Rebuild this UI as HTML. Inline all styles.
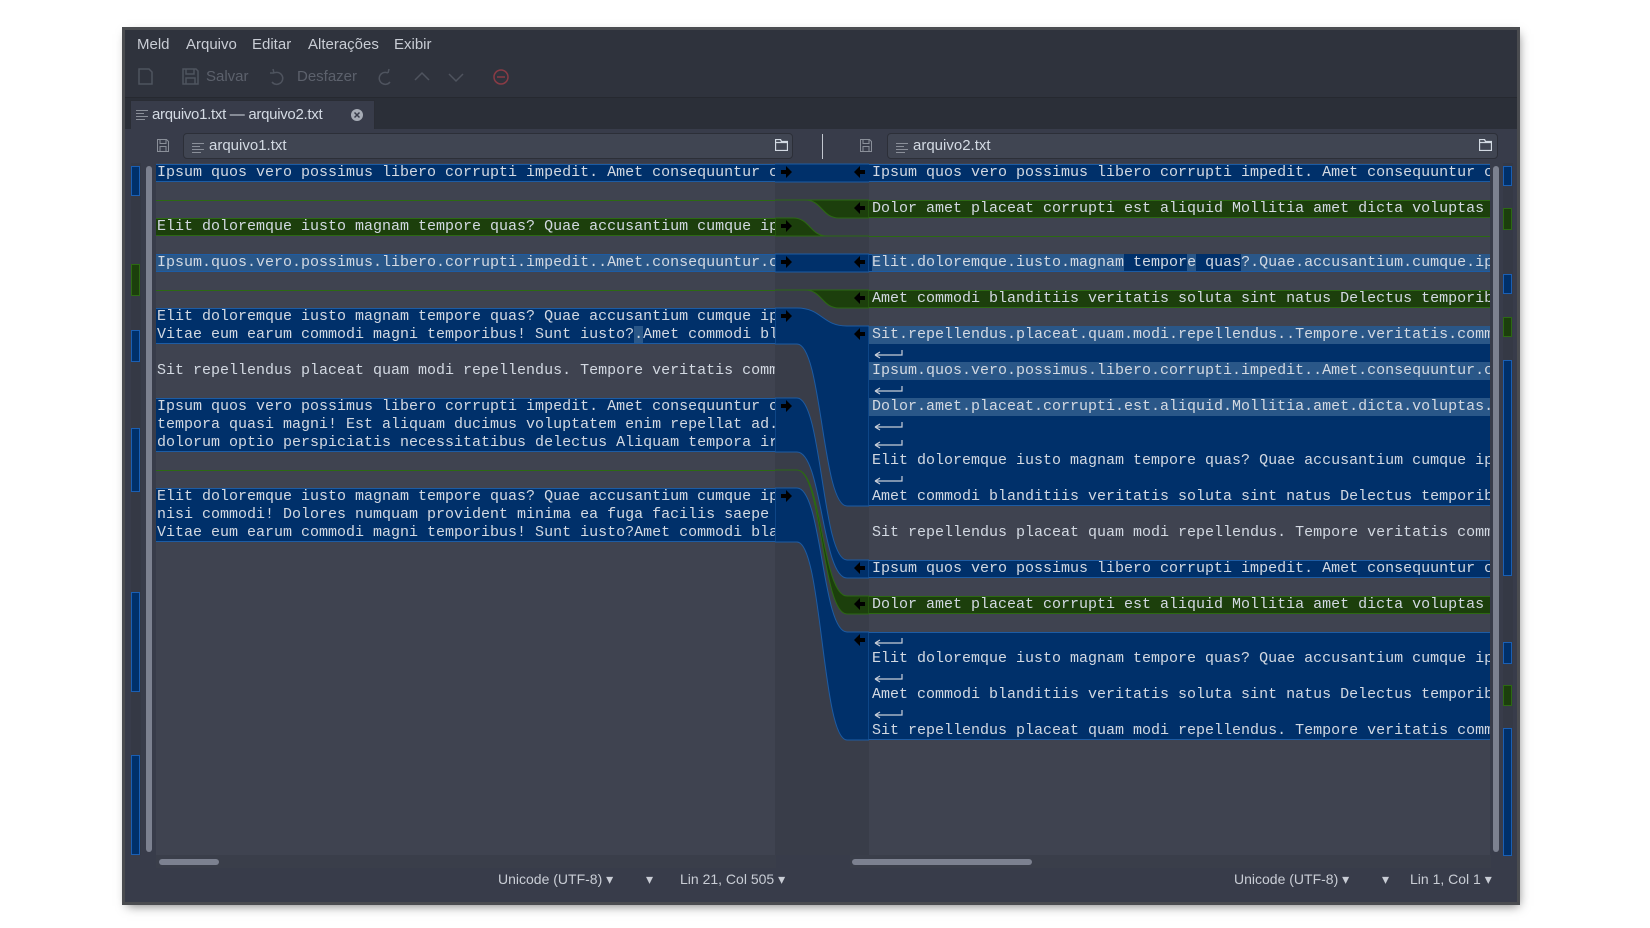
<!DOCTYPE html>
<html><head><meta charset="utf-8"><style>
*{box-sizing:border-box;margin:0;padding:0}
body{width:1650px;height:928px;background:#fff;position:relative;overflow:hidden;font-family:"Liberation Sans",sans-serif}
.win{position:absolute;left:125px;top:30px;width:1392px;height:872px;background:#2f333d;box-shadow:0 0 0 3px #4a4c50,2px 4px 10px rgba(0,0,0,.5)}
.a{position:absolute}
.menu{top:36px;font-size:15px;color:#c9cdd5}
.tb{top:68px;font-size:15px;color:#5c616c}
.mono{font-family:"Liberation Mono",monospace;font-size:15px;color:#d3d9e2;white-space:pre;line-height:18px}
.pane{position:absolute;background:#3f4350;overflow:hidden}
.ln{position:absolute;left:0;right:0;height:18px}
.bb{background:#00306a;border-top:1px solid #1d5ca4;border-bottom:1px solid #1d5ca4}
.gb{background:#1c3f0c;border-top:1px solid #2c6913;border-bottom:1px solid #2c6913}
.h{background:#2a5788}
.d{background:#00306a}
.gl{position:absolute;left:0;right:0;height:1px;background:#2c6913}
.ov{position:absolute;width:9px;background:#00306a;border:1px solid #1a5fb4}
.ovg{position:absolute;width:9px;background:#1c3f0c;border:1px solid #2c6913}
.st{position:absolute;top:871px;font-size:14px;color:#c9cdd5}
</style></head><body>
<div class="win"></div>
<div class="a menu" style="left:137px">Meld</div>
<div class="a menu" style="left:186px">Arquivo</div>
<div class="a menu" style="left:252px">Editar</div>
<div class="a menu" style="left:308px">Alterações</div>
<div class="a menu" style="left:394px">Exibir</div>
<svg class="a" style="left:135px;top:66px" width="390" height="22" fill="none" stroke="#4f545f" stroke-width="1.5">
 <path d="M4 3h10l3 3v12H4z"/>
 <path d="M48 3h13l2 2v13H48zM51 3v5h8V3M51 18v-6h9v6"/>
 <path d="M139 7a6 6 0 1 1 -2 9M139 7l-1 -4M139 7l-4 0"/>
 <path d="M253 7a6 6 0 1 0 2 9M253 7l1 -4"/>
 <path d="M280 14l7-7 7 7"/>
 <path d="M314 8l7 7 7-7"/>
 <circle cx="366" cy="11" r="7" stroke="#8a3b45"/><path d="M362 11h8" stroke="#8a3b45"/>
</svg>
<div class="a tb" style="left:206px">Salvar</div>
<div class="a tb" style="left:297px">Desfazer</div>
<div class="a" style="left:125px;top:97px;width:1392px;height:1px;background:#262930"></div>
<div class="a" style="left:125px;top:98px;width:1392px;height:31px;background:#2b2f38"></div>
<div class="a" style="left:130px;top:100px;width:245px;height:30px;background:#383c4a;border:1px solid #2a2d35;border-bottom:none"></div>
<svg class="a" style="left:136px;top:109px" width="12" height="12" stroke="#8a8f99"><path d="M0 1.5h12M0 4.5h8M0 7.5h12M0 10.5h9"/></svg>
<div class="a" style="left:152px;top:106px;font-size:15px;letter-spacing:-0.3px;color:#d3dae3">arquivo1.txt — arquivo2.txt</div>
<svg class="a" style="left:351px;top:109px" width="12" height="12"><circle cx="6" cy="6" r="6" fill="#a6abb5"/><path d="M3.5 3.5l5 5M8.5 3.5l-5 5" stroke="#383c4a" stroke-width="1.5"/></svg>
<div class="a" style="left:125px;top:129px;width:1392px;height:773px;background:#383c4a"></div>
<!-- headers -->
<svg class="a" style="left:157px;top:139px" width="12" height="13" fill="none" stroke="#8a8f99"><path d="M.5 .5h9l2 2v10H.5zM3 .5v4h6v-4M3 12.5v-5h6v5"/></svg>
<div class="a" style="left:183px;top:133px;width:610px;height:26px;background:#404552;border:1px solid #2c2f38;border-radius:4px"></div>
<svg class="a" style="left:192px;top:142px" width="12" height="12" stroke="#8a8f99"><path d="M0 1.5h12M0 4.5h8M0 7.5h12M0 10.5h9"/></svg>
<div class="a" style="left:209px;top:137px;font-size:15px;color:#d3dae3">arquivo1.txt</div>
<svg class="a" style="left:775px;top:139px" width="13" height="12" fill="none" stroke="#d3dae3" stroke-width="1.3"><path d="M.5 .5h5l1 2h6v9H.5zM.5 3.5h12"/></svg>
<div class="a" style="left:822px;top:134px;width:1px;height:25px;background:#c2c7cf"></div>
<svg class="a" style="left:860px;top:139px" width="12" height="13" fill="none" stroke="#8a8f99"><path d="M.5 .5h9l2 2v10H.5zM3 .5v4h6v-4M3 12.5v-5h6v5"/></svg>
<div class="a" style="left:887px;top:133px;width:611px;height:26px;background:#404552;border:1px solid #2c2f38;border-radius:4px"></div>
<svg class="a" style="left:896px;top:142px" width="12" height="12" stroke="#8a8f99"><path d="M0 1.5h12M0 4.5h8M0 7.5h12M0 10.5h9"/></svg>
<div class="a" style="left:913px;top:137px;font-size:15px;color:#d3dae3">arquivo2.txt</div>
<svg class="a" style="left:1479px;top:139px" width="13" height="12" fill="none" stroke="#d3dae3" stroke-width="1.3"><path d="M.5 .5h5l1 2h6v9H.5zM.5 3.5h12"/></svg>
<!-- overview left -->
<div class="a" style="left:131px;top:163px;width:10px;height:692px;background:#353945"></div>
<div class="ov" style="left:131px;top:166px;height:30px"></div>
<div class="ovg" style="left:131px;top:264px;height:32px"></div>
<div class="ov" style="left:131px;top:330px;height:32px"></div>
<div class="ov" style="left:131px;top:428px;height:64px"></div>
<div class="ov" style="left:131px;top:592px;height:100px"></div>
<div class="ov" style="left:131px;top:755px;height:100px"></div>
<div class="a" style="left:146px;top:166px;width:6px;height:686px;background:#7c8190;border-radius:3px"></div>
<!-- overview right -->
<div class="a" style="left:1503px;top:163px;width:10px;height:692px;background:#353945"></div>
<div class="ov" style="left:1503px;top:166px;height:20px"></div>
<div class="ovg" style="left:1503px;top:208px;height:22px"></div>
<div class="ov" style="left:1503px;top:274px;height:20px"></div>
<div class="ovg" style="left:1503px;top:317px;height:20px"></div>
<div class="ov" style="left:1503px;top:360px;height:216px"></div>
<div class="ov" style="left:1503px;top:642px;height:22px"></div>
<div class="ovg" style="left:1503px;top:685px;height:21px"></div>
<div class="ov" style="left:1503px;top:728px;height:128px"></div>
<div class="a" style="left:1493px;top:166px;width:6px;height:686px;background:#7c8190;border-radius:3px"></div>
<!-- gutter strip -->
<div class="a" style="left:775px;top:163px;width:94px;height:692px;background:#393d49"></div>

<!-- left pane -->
<div class="pane mono" style="left:156px;top:163px;width:619px;height:692px">
 <div class="ln bb" style="top:1px"></div>
 <div class="gl" style="top:37px"></div>
 <div class="ln gb" style="top:55px"></div>
 <div class="ln bb h" style="top:91px"></div>
 <div class="gl" style="top:127px"></div>
 <div class="ln bb" style="top:145px;height:36px"></div>
 <div class="ln bb" style="top:235px;height:54px"></div>
 <div class="gl" style="top:307px"></div>
 <div class="ln bb" style="top:325px;height:54px"></div>
 <div class="ln" style="top:1px;padding-left:1px">Ipsum quos vero possimus libero corrupti impedit. Amet consequuntur c</div>
 <div class="ln" style="top:55px;padding-left:1px">Elit doloremque iusto magnam tempore quas? Quae accusantium cumque ip</div>
 <div class="ln" style="top:91px;padding-left:1px">Ipsum.quos.vero.possimus.libero.corrupti.impedit..Amet.consequuntur.c</div>
 <div class="ln" style="top:145px;padding-left:1px">Elit doloremque iusto magnam tempore quas? Quae accusantium cumque ip</div>
 <div class="ln" style="top:163px;padding-left:1px">Vitae eum earum commodi magni temporibus! Sunt iusto?<span class="h">.</span>Amet commodi bl</div>
 <div class="ln" style="top:199px;padding-left:1px">Sit repellendus placeat quam modi repellendus. Tempore veritatis comm</div>
 <div class="ln" style="top:235px;padding-left:1px">Ipsum quos vero possimus libero corrupti impedit. Amet consequuntur c</div>
 <div class="ln" style="top:253px;padding-left:1px">tempora quasi magni! Est aliquam ducimus voluptatem enim repellat ad.</div>
 <div class="ln" style="top:271px;padding-left:1px">dolorum optio perspiciatis necessitatibus delectus Aliquam tempora ir</div>
 <div class="ln" style="top:325px;padding-left:1px">Elit doloremque iusto magnam tempore quas? Quae accusantium cumque ip</div>
 <div class="ln" style="top:343px;padding-left:1px">nisi commodi! Dolores numquam provident minima ea fuga facilis saepe </div>
 <div class="ln" style="top:361px;padding-left:1px">Vitae eum earum commodi magni temporibus! Sunt iusto?Amet commodi bla</div>
</div>

<!-- gutter -->
<svg class="a" style="left:775px;top:163px" width="94" height="692" stroke-width="1">
 <g fill="#00306a" stroke="#1d5ca4">
  <path d="M0 1H94V19H0Z" stroke="none"/><path d="M0 1H94M0 19H94"/>
  <path d="M0 91H94V109H0Z"/><path d="M0 145L22 145C47 145 47 163 72 163L94 163L94 343L72 343C47 343 47 181 22 181L0 181Z"/>
  <path d="M0 235L22 235C47 235 47 397 72 397L94 397L94 415L72 415C47 415 47 289 22 289L0 289Z"/>
  <path d="M0 325L22 325C47 325 47 469 72 469L94 469L94 577L72 577C47 577 47 379 22 379L0 379Z"/>
 </g>
 <g fill="#1c3f0c" stroke="#2c6913">
  <path d="M0 37L30 37C47 37 47 37 64 37L94 37L94 55L64 55C47 55 47 37 30 37Z"/>
  <path d="M0 55L18 55C35 55 35 73 52 73L94 73L94 73L52 73C35 73 35 73 18 73L0 73Z"/>
  <path d="M0 127L30 127C47 127 47 127 64 127L94 127L94 145L64 145C47 145 47 127 30 127Z"/>
  <path d="M0 307L22 307C47 307 47 433 72 433L94 433L94 451L72 451C47 451 47 307 22 307Z"/>
 </g>
 <g fill="#000">
  <path id="ra" d="M6 7h5v-4l6 6-6 6v-4H6z"/>
  <use href="#ra" y="54"/><use href="#ra" y="90"/><use href="#ra" y="144"/><use href="#ra" y="234"/><use href="#ra" y="324"/>
  <path id="la" d="M90 7h-5v-4l-6 6 6 6v-4h5z"/>
  <use href="#la" y="36"/><use href="#la" y="90"/><use href="#la" y="126"/><use href="#la" y="162"/><use href="#la" y="396"/><use href="#la" y="432"/><use href="#la" y="468"/>
 </g>
</svg>

<!-- right pane -->
<div class="pane mono" style="left:869px;top:163px;width:621px;height:692px">
 <div class="ln bb" style="top:1px"></div>
 <div class="ln gb" style="top:37px"></div>
 <div class="gl" style="top:73px"></div>
 <div class="ln bb" style="top:91px"></div>
 <div class="ln gb" style="top:127px"></div>
 <div class="ln bb" style="top:163px;height:180px"></div>
 <div class="ln bb" style="top:397px"></div>
 <div class="ln gb" style="top:433px"></div>
 <div class="ln bb" style="top:469px;height:108px"></div>
 <div class="ln" style="top:1px;padding-left:3px">Ipsum quos vero possimus libero corrupti impedit. Amet consequuntur c</div>
 <div class="ln" style="top:37px;padding-left:3px">Dolor amet placeat corrupti est aliquid Mollitia amet dicta voluptas </div>
 <div class="ln" style="top:91px;padding-left:3px"><span class="h">Elit.doloremque.iusto.magnam</span><span class="d"> tempor</span><span class="h">e</span><span class="d"> quas</span><span class="h">?.Quae.accusantium.cumque.ip</span></div>
 <div class="ln" style="top:127px;padding-left:3px">Amet commodi blanditiis veritatis soluta sint natus Delectus temporib</div>
 <div class="ln h" style="top:163px;padding-left:3px">Sit.repellendus.placeat.quam.modi.repellendus..Tempore.veritatis.comm</div>
 <div class="ln h" style="top:199px;padding-left:3px">Ipsum.quos.vero.possimus.libero.corrupti.impedit..Amet.consequuntur.c</div>
 <div class="ln h" style="top:235px;padding-left:3px">Dolor.amet.placeat.corrupti.est.aliquid.Mollitia.amet.dicta.voluptas.</div>
 <div class="ln" style="top:289px;padding-left:3px">Elit doloremque iusto magnam tempore quas? Quae accusantium cumque ip</div>
 <div class="ln" style="top:325px;padding-left:3px">Amet commodi blanditiis veritatis soluta sint natus Delectus temporib</div>
 <div class="ln" style="top:361px;padding-left:3px">Sit repellendus placeat quam modi repellendus. Tempore veritatis comm</div>
 <div class="ln" style="top:397px;padding-left:3px">Ipsum quos vero possimus libero corrupti impedit. Amet consequuntur c</div>
 <div class="ln" style="top:433px;padding-left:3px">Dolor amet placeat corrupti est aliquid Mollitia amet dicta voluptas </div>
 <div class="ln" style="top:487px;padding-left:3px">Elit doloremque iusto magnam tempore quas? Quae accusantium cumque ip</div>
 <div class="ln" style="top:523px;padding-left:3px">Amet commodi blanditiis veritatis soluta sint natus Delectus temporib</div>
 <div class="ln" style="top:559px;padding-left:3px">Sit repellendus placeat quam modi repellendus. Tempore veritatis comm</div>
 <svg class="a" style="left:0;top:0" width="40" height="692" fill="none" stroke="#c8ced8" stroke-width="1.2">
  <path id="rt" d="M6 192h27v-5M6 192l5-3M6 192l5 3"/>
  <use href="#rt" y="36"/><use href="#rt" y="72"/><use href="#rt" y="90"/><use href="#rt" y="126"/>
  <use href="#rt" y="288"/><use href="#rt" y="324"/><use href="#rt" y="360"/>
 </svg>
</div>

<!-- scrollbars / status -->
<div class="a" style="left:156px;top:855px;width:620px;height:13px;background:#3a3e4a"></div>
<div class="a" style="left:159px;top:859px;width:60px;height:6px;background:#7c8190;border-radius:3px"></div>
<div class="a" style="left:850px;top:855px;width:641px;height:13px;background:#3a3e4a"></div>
<div class="a" style="left:852px;top:859px;width:180px;height:6px;background:#7c8190;border-radius:3px"></div>
<div class="st" style="left:498px">Unicode (UTF-8) ▾</div>
<div class="st" style="left:646px">▾</div>
<div class="st" style="left:680px">Lin 21, Col 505 ▾</div>
<div class="st" style="left:1234px">Unicode (UTF-8) ▾</div>
<div class="st" style="left:1382px">▾</div>
<div class="st" style="left:1410px">Lin 1, Col 1 ▾</div>
</body></html>
